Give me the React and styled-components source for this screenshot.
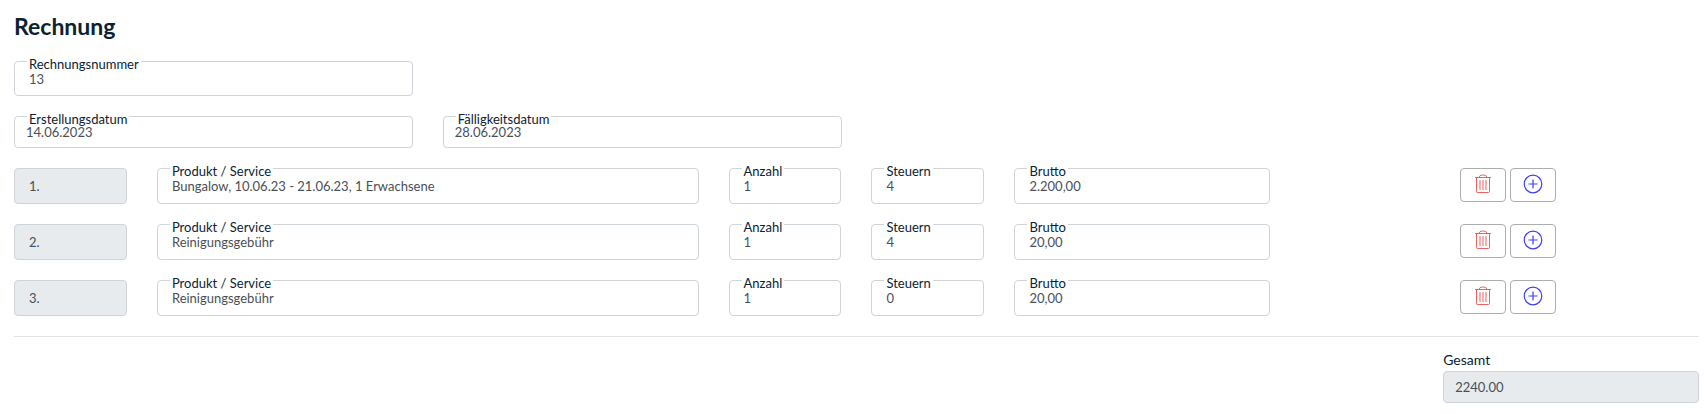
import React from "react";
import styled, { createGlobalStyle } from "styled-components";

const GlobalStyle = createGlobalStyle`
  *, *::before, *::after { box-sizing: border-box; }
  body {
    margin: 0;
    background: #fff;
    color: #0c2233;
    font-family: Lato, "Liberation Sans", sans-serif;
    font-size: 13px;
  }
`;

const Form = styled.form`
  display: flex;
  flex-direction: column;
  gap: 20px;
  padding: 12px 5px 12px 14px;
`;

const Title = styled.h1`
  margin: 0;
  font-size: 23px;
  line-height: 29px;
  font-weight: 700;
`;

const Row = styled.div`
  display: grid;
  grid-template-columns: repeat(12, minmax(0, 1fr));
  column-gap: 30px;
  align-items: start;
`;

const Cell = styled.div`
  position: relative;
  display: flex;
  grid-column: span ${(p) => p.$span};
`;

const FloatingLabel = styled.label`
  position: absolute;
  top: -6px;
  left: 13px;
  padding: 0 2px;
  background: linear-gradient(#fff, #fff) 0 6px / 100% 1px no-repeat;
  line-height: 18px;
`;

const sizes = {
  date: { height: 32, padding: "0 11px" },
  header: { height: 35, padding: "0 14px" },
  item: { height: 36, padding: "0 14px" },
};

const TextInput = styled.input`
  width: 100%;
  min-width: 0;
  height: ${(p) => sizes[p.$size].height}px;
  padding: ${(p) => sizes[p.$size].padding};
  border: 1px solid #ced4da;
  border-radius: 4px;
  background: ${(p) => (p.readOnly ? "#e7ebee" : "#fff")};
  color: #495057;
  font: inherit;
  outline: none;
`;

const Actions = styled.div`
  display: flex;
  gap: 4px;
  grid-column: 11 / span 2;
  padding-left: 17px;
`;

const IconButton = styled.button`
  display: flex;
  justify-content: center;
  width: 46px;
  height: 34px;
  padding: 5px 0 0;
  border: 1px solid #adadad;
  border-radius: 4px;
  background: #fff;
  color: ${(p) => p.$color};
  cursor: pointer;
`;

const Summary = styled.section`
  display: flex;
  flex-direction: column;
  gap: 14px;
`;

const Divider = styled.hr`
  width: 100%;
  height: 1px;
  margin: 0;
  border: 0;
  background: #e1e3e5;
`;

const Total = styled.div`
  display: flex;
  flex-direction: column;
  gap: 2px;
  grid-column: 11 / span 2;
`;

const TotalLabel = styled.label`
  font-size: 14px;
  line-height: 18px;
`;

function Field({ id, label, value, span, size = "item" }) {
  return (
    <Cell $span={span}>
      <TextInput id={id} $size={size} defaultValue={value} />
      <FloatingLabel htmlFor={id}>{label}</FloatingLabel>
    </Cell>
  );
}

function TrashIcon() {
  return (
    <svg width="20" height="20" viewBox="0 0 20 20" fill="none" stroke="currentColor" aria-hidden="true">
      <path d="M2 3.5h16M6 3.500Q6.500 1 9 1h2q2.500 0 3 2.500M3.500 3.500v14q0 1 1 1h11q1 0 1-1v-14" />
      <path d="M7 6v10M10 6v10M13 6v10" />
    </svg>
  );
}

function PlusIcon() {
  return (
    <svg width="20" height="20" viewBox="0 0 20 20" fill="none" stroke="currentColor" strokeWidth="1.2" aria-hidden="true">
      <circle cx="10" cy="10" r="8.800" />
      <path d="M10 5.500v9M5.500 10h9" />
    </svg>
  );
}

const items = [
  { service: "Bungalow, 10.06.23 - 21.06.23, 1 Erwachsene", count: "1", tax: "4", gross: "2.200,00" },
  { service: "Reinigungsgebühr", count: "1", tax: "4", gross: "20,00" },
  { service: "Reinigungsgebühr", count: "1", tax: "0", gross: "20,00" },
];

export default function App() {
  return (
    <>
      <GlobalStyle />
      <Form onSubmit={(e) => e.preventDefault()}>
        <Title>Rechnung</Title>
        <Row>
          <Field id="number" label="Rechnungsnummer" value="13" span={3} size="header" />
        </Row>
        <Row>
          <Field id="created" label="Erstellungsdatum" value="14.06.2023" span={3} size="date" />
          <Field id="due" label="Fälligkeitsdatum" value="28.06.2023" span={3} size="date" />
        </Row>
        {items.map((item, i) => (
          <Row key={i}>
            <Cell $span={1}>
              <TextInput $size="item" readOnly value={`${i + 1}.`} aria-label="Position" />
            </Cell>
            <Field id={`service-${i}`} label="Produkt / Service" value={item.service} span={4} />
            <Field id={`count-${i}`} label="Anzahl" value={item.count} span={1} />
            <Field id={`tax-${i}`} label="Steuern" value={item.tax} span={1} />
            <Field id={`gross-${i}`} label="Brutto" value={item.gross} span={2} />
            <Actions>
              <IconButton type="button" $color="#f0605d" aria-label="Löschen">
                <TrashIcon />
              </IconButton>
              <IconButton type="button" $color="#3f3ffb" aria-label="Hinzufügen">
                <PlusIcon />
              </IconButton>
            </Actions>
          </Row>
        ))}
        <Summary>
          <Divider />
          <Row>
            <Total>
              <TotalLabel htmlFor="total">Gesamt</TotalLabel>
              <TextInput id="total" $size="date" readOnly value="2240.00" />
            </Total>
          </Row>
        </Summary>
      </Form>
    </>
  );
}
